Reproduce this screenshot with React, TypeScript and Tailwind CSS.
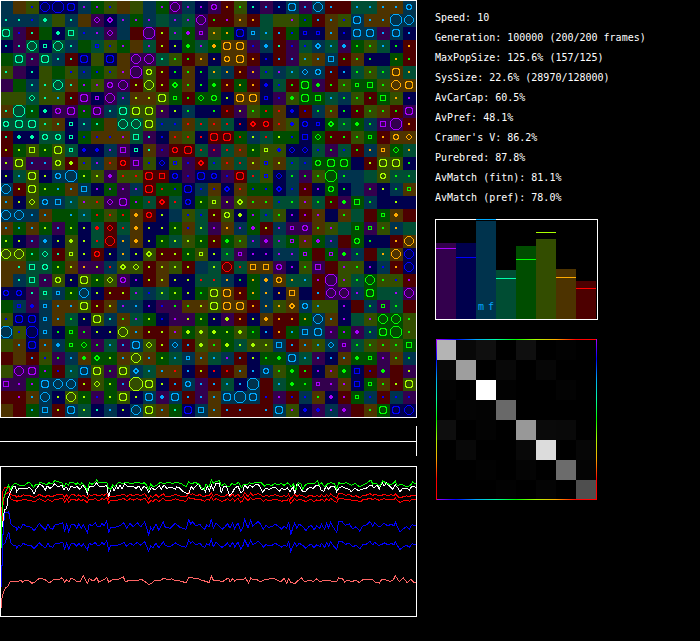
import React from "react";

const BRIGHT: Record<string, string> = {
  P: "#aa00ff", B: "#0000ff", C: "#00aaff", T: "#00ffaa",
  G: "#00ff00", Y: "#aaff00", O: "#ffaa00", R: "#ff0000",
};
const DARK: Record<string, string> = {
  P: "#33004d", B: "#00004d", C: "#00334d", T: "#004d33",
  G: "#004d00", Y: "#334d00", O: "#4d3300", R: "#4d0000",
};

// One token per cell: background, marker colour, marker shape.
const FIELD = [
  "C.. O.. YBa BBO BBX BBo CPa GPa YBa O.. Y.. C.. GPa PPO CPa BPa PPc ROa YGa BTa PCa BCa CCo PCa CCO RCa R.. TCa TCa OCa OCa CCc",
  "CTa CTa CBa TTb Y.. CTa O.. PPd BPr CPa GPa CPa T.. CPa TPa PPO RGa RPa OOa ROa T.. Y.. YPa GBa RCa OCa YBa CCo OCa OCa CCX CCO",
  "TTo PBa RTa G.. BTb TTq CBa CPa PPd C.. R.. PPX RYa TPa GPb PPs YOa GOa BBo CCs TCa RCa GBa BBs BBs OCa BBa CCo CCo PCa CCo BCa",
  "BTa PTa TTO BTs TTO CTa G.. TBs YBa GPa O.. TPa RYa BYa GGb TPa GOb OOo OOo PBa CCb RTa PBa TBa CCr TCa PCb GGa YGa TCa BGa ROa",
  "G.. TTo PTa TTo CTa RTa BBo Y.. BBo O.. PPO PPO TTa YGa RGa OOa BOa OOc OOo ROa BBa RCa PCa YCa OCa CCq RGa OGa BGa B.. GOa RGa",
  "YTa P.. BTa Y.. G.. YBa CBa GBa YBa OPa PPX YYc RYa BGa OGa BGa TOa COa ROa POa TBa CPa TCa CCd CCc RCa BCa TGa YGa TGa OOo TOa",
  "P.. G.. CTa YTa TTO OTa GPa YPa PPc PPO RYa YYO RYa GGr OGa BGa GGb ROa GOa ROa BBb TBa RGa GGo PGb RGa YGa GGs GGq YGa OOO OOo",
  "Y.. Y.. TTd YTa YCa RTa PPo BPs PPO CPa OYa OYa YYo GGs RGa GGd GGc BYa OOo OOo BBs PBa YGb GGo GGq TCa CGa YGa RGa GGq YOa BPa",
  "OTa TTX GTa BTb PPc PPo GPa PPo CTa TTo YYo YYo PYa BYa CGa B.. BGa RRa PYa YGa GRa ORa BBb RBa CGa OGa BGa RGa YGa OGa RGa PPo",
  "TTc TTo TTo YTa OTa BTs CTa GTa O.. TTO TTO YYo CBa CBa ORa TRa ORa TRa BRa RRr RRc ORa YBb BBc BBs GGr TGa GGb CGa PPq PPX ROa",
  "RTa BTb BTb TTc TTc BTs GBa OBa OBa OPa TTq PTa BBa ORa YRa BRa RRo RRo GRa CYa TRa GYa GBa BBq GGd RGa RGa YGa GGs ROa OOc OOd",
  "RYa GYa YYq GYa YYo TTs BBb BBb CPa PPq BTs OTa PBa RRc RRo TRa PRa TRa ORa GYa YYs YBb BBd BBd TBa PGa TBa RGa COa OOs GGd TOa",
  "PYa YYo PCa PCa YYc RYb YBa CPa ORa RRc PPq YBa BBd YBs PBa RRr TBa ORa TRa OYa YBs OYa TBa CBa GGc GGo GGo B.. RYa YYo YYo BGa",
  "BYa TCa YYo BYa CCc CCX GYa YYa PPb YRa YRa RRo RRq BBc PBa BBo BBc PBa RRo TRa YBs BBd CGa PGa YGa GGX CGa C.. T.. YYc TGa TGa",
  "CCO RYa YYo GYa GCa OCa CCq BPa GPa PPa CPa RRo GRa GBa BBo CBa OBa BBr ORa GBa GBa BBr CBa RPa BPa GGc BGa C.. PGa BYa CGa OGs",
  "OCa BYa YYd CCc CCq TCa YPa YRa PPd PPo GPa TRa RRr TRa BBc GYa YYs PYa YYr OGa OGa TBa TGa OPa TGa RGa PGb GGq CGa B.. BYa B..",
  "CCO CCO CCa OCa G.. GCa TCa GRa YRa GRa OOb RRc BYa C.. YBa TBa RYa YYc BYb GPa TBa YGa BPa RPa OPa B.. OGa T.. R.. GGs OOb R..",
  "OCa GCa OCa GYa PCa GYa BYa TRb RRd TRa OOb BYa BYa GYa OBa TYa PPa OOa CPa GPb RYa CPa PPs PPc OGa YPa T.. GGs PGs YGa COa T..",
  "GYa BYa PCa CCb BYa YYb BYa TRa RRO COa OOb BYa GYa TYa YYa GYa RYa GGb YGa CPa PPb TPa GPs OPa GPb CPa R.. GGc BGa B.. ROa OOO",
  "YYO YYO GTa TTd RTa YYs BYa RRc BYa COa BYa YYr RYa RYa GYa YYs BYa TGa PPs BPa BPa CPa CPa GPs R.. GPs PGb CGa R.. TOa OOO BBO",
  "O.. OTa TTq TTc GYa OYa POa PYa CRa YYr YYd RYa OYa YYa RYa C.. TYa RRO TRa OOq OOq PPc BPa YGa PPq R.. YPa YGa BPa CBa ROa BBO",
  "O.. CTa TTq PTa YYc BYa YYo GYa YYd PPc BPa RYa OYa BYa BYa TRa TRa COa BGa GOa COb OOc TOa TCa RPa PPX YPa TGa GGO YGa YBa RPa",
  "BBc BBc PTa TTs CCs GYa CCO BYa RYa RYa TPa CBa TYa GYa BYa GGa YYo OOo ROa GOa COa BOa OOq B.. RCa PPO PPO CPa GGo T.. TPa PPO",
  "G.. CBs PBb CCs OCa OCa YYo RYa OYa CPa CCa BPa PBa PGa OGa OYa YYo OOo OOo ROa COa YOa OOr CCc YCa Y.. BPa R.. CGa PGs TGa R..",
  "YBa BBo BBo CCs OCa TGa BYa YYo CTa OGa TPa GYa BBa PPa PYa GYa BYa PYb ROa BYa OOb ROa ROa GOa CCO OCa BPa T.. YPa GGO GGO YGa",
  "CCX YBa BBX CCs BGa GGs PGa BYa BYa YYO OCa RYa RYa OPa GYb YYb GYb GYa YYb GGa BCa ROa GCa CCq CCo PPa GPa PPb CGa GGo GGX YGa",
  "Y.. OCa BBo OCa CCb GGs GGd PGa TCa PCa CCo YYd RYa CCd RCa YYb OGa GYb TYa YYb YYa CCq RCa OCa YCa CCd PPs TGa YGa OGa YGa GGq",
  "R.. O.. RCa YBa PGa CCa OGb GGr GYa OCa YYO OCa GYa TCa CCs OCa TCa CPa RCa BYa GGa GGb CCo TCa PCa BCa OCa GGb GGs PPa OGa CGa",
  "Y.. PPO PPo GPa RBa TCa CCo YYo PGa YYo CCr TCa OCa ORa BCa RYa BRa RRa OCa BCa CCc YGa GGb RGa BPa OPa GGb BBq RBa PGb R.. PYa",
  "PPq PPa GPa CCo CCO CCO RYa YYd GYa PCa YYZ YYo BYa RCa CCc PCa RCa TCa BCa CCX R.. TCa GGb GGa PPs PPa OPa BBq GGs OGa RYa YYo",
  "R.. RPa OCa CCO BYa YYO GYa PBa GYa YYo BYa CCo PCb CCo RCa PCa OCa CCo CCX CCo RBa PPa RBa CBa OGa BPb RPa GGs CBa RBa CBa PBa",
  "O.. R.. GCa CCq RYa CCo TYa BTa CCa BYa CCO YYo OCa GTa BBo CCq OCa RCa RCa R.. RCa CCo YPa BBb PBb CPa PPb R.. OGa GGo BBo BBO",
].map((row) => row.split(" "));

// Ring built from whole pixels: four straight runs joined by diagonal corners.
function ringPath(x: number, y: number, half: number, cut: number) {
  const run = 2 * (half - cut);
  let d = "";
  d += `M${x - half + cut} ${y - half}h${run}v1h-${run}z`;
  d += `M${x - half + cut} ${y + half - 1}h${run}v1h-${run}z`;
  d += `M${x - half} ${y - half + cut}h1v${run}h-1z`;
  d += `M${x + half - 1} ${y - half + cut}h1v${run}h-1z`;
  const steps = cut === 1 ? [[1, 1]] : Array.from({ length: cut - 1 }, (_, k) => [k + 1, cut - 1 - k]);
  for (const [i, j] of steps) {
    d += `M${x - half + i} ${y - half + j}h1v1h-1z`;
    d += `M${x + half - 1 - i} ${y - half + j}h1v1h-1z`;
    d += `M${x - half + i} ${y + half - 1 - j}h1v1h-1z`;
    d += `M${x + half - 1 - i} ${y + half - 1 - j}h1v1h-1z`;
  }
  return d;
}

const RINGS: Record<string, [number, number]> = {
  d: [3, 2], c: [3, 1], o: [4, 1], O: [5, 3], X: [6, 3], Z: [7, 4],
};

function Marker({ shape, color, x, y }: { shape: string; color: string; x: number; y: number }) {
  const ring = { fill: "none", stroke: color, strokeWidth: 1 };
  if (shape in RINGS) {
    return <path d={ringPath(x, y, RINGS[shape][0], RINGS[shape][1])} fill={color} />;
  }
  switch (shape) {
    case "a":
      return <rect x={x - 1} y={y - 1} width={2} height={2} fill={color} />;
    case "b":
      return <path d={`M${x - 1} ${y - 2}h2v1h1v2h-1v1h-2v-1h-1v-2h1z`} fill={color} />;
    case "s":
      return <rect x={x - 1.5} y={y - 1.5} width={3} height={3} {...ring} />;
    case "r":
      return (
        <path
          fillRule="evenodd"
          d={`M${x - 1} ${y - 3}h2v1h1v1h1v2h-1v1h-1v1h-2v-1h-1v-1h-1v-2h1v-1h1zM${x - 1} ${y - 1}h2v2h-2z`}
          fill={color}
        />
      );
    case "q":
      return <rect x={x - 2.5} y={y - 2.5} width={5} height={5} {...ring} />;
    default:
      return null;
  }
}

function Field() {
  return (
    <svg width={417} height={418} shapeRendering="crispEdges" role="img" aria-label="Population field" className="block">
      {FIELD.map((row, r) =>
        row.map((cell, c) => (
          <rect key={`${r}-${c}`} x={c * 13} y={r * 13 + 1} width={13} height={13} fill={DARK[cell[0]]} />
        ))
      )}
      {FIELD.map((row, r) =>
        row.map((cell, c) => (
          <Marker key={`${r}-${c}`} shape={cell[2]} color={BRIGHT[cell[1]]} x={c * 13 + 6} y={r * 13 + 7} />
        ))
      )}
      <rect x={0.5} y={0.5} width={416} height={417} fill="none" stroke="#fff" />
    </svg>
  );
}

// History samples as x,y pairs at three units per pixel; the second half starts at x = 624.
type Series = { left: number[]; right: number[] };

const GREEN: Series = {
  left: [4,383,5,310,8,245,14,225,20,208,26,195,32,208,38,195,46,190,58,195,66,198,74,195,85,187,92,190,100,203,108,193,114,195,120,188,132,190,140,195,146,188,156,192,164,182,176,186,186,188,192,200,198,190,205,196,210,187,220,187,228,193,234,188,240,195,246,188,256,200,262,212,268,188,276,193,284,188,290,180,296,188,310,188,320,186,325,205,332,208,338,195,344,200,354,188,370,190,380,186,392,192,404,188,418,188,426,192,432,188,440,195,446,208,452,192,460,200,470,195,480,188,492,190,505,188,520,190,530,186,545,192,558,200,566,186,576,192,584,187,592,190,600,195,606,205,612,210,618,192],
  right: [0,198,4,200,10,180,16,190,22,185,34,182,40,198,50,190,58,200,64,200,72,190,80,195,92,187,100,203,108,192,116,195,124,188,132,192,140,188,160,188,170,198,180,192,190,198,200,190,210,195,220,190,228,196,240,188,250,200,256,192,264,210,270,188,278,190,284,207,292,195,302,190,318,192,328,182,334,195,340,188,350,200,360,190,370,188,380,192,386,208,392,188,402,192,414,188,430,196,442,190,454,200,466,195,478,188,488,180,494,192,504,190,515,198,524,182,535,190,548,194,556,190,562,183,568,198,578,192,590,198,600,200,608,195,614,186,624,192],
};
const WHITE: Series = {
  left: [8,320,10,290,14,270,20,265,24,235,32,215,40,200,46,200,50,215,58,205,66,207,80,205,90,203,96,210,102,222,108,208,120,192,130,200,136,210,142,198,150,205,158,200,164,190,172,200,186,196,192,210,198,200,206,212,214,198,222,203,232,200,240,208,248,196,256,205,262,222,268,200,280,200,290,188,298,200,310,200,320,195,326,232,332,208,338,202,342,212,350,198,354,208,360,195,366,207,374,192,384,200,398,198,408,205,416,198,424,210,432,198,440,205,446,218,454,203,466,210,478,198,484,208,492,195,500,205,514,202,526,208,530,200,540,205,550,215,566,222,574,200,580,207,588,198,596,192,604,210,610,205,616,215,622,200],
  right: [0,205,4,212,10,195,16,210,24,190,34,190,40,220,46,200,56,200,64,226,72,220,80,205,90,198,98,218,104,215,110,195,118,205,126,195,134,202,142,195,150,192,158,205,164,218,172,205,184,208,196,202,206,205,214,215,220,205,230,210,238,203,246,215,250,208,256,200,260,222,268,190,276,202,284,215,292,215,300,205,308,203,316,205,326,195,334,195,340,212,348,214,354,198,362,208,370,198,380,200,386,215,394,202,404,200,414,205,424,208,430,216,440,205,452,212,462,208,474,205,484,198,492,195,498,205,508,195,514,208,522,186,528,198,536,188,544,198,554,208,562,195,570,205,576,215,584,205,596,205,604,210,612,198,624,202],
};
const BLUE: Series = {
  left: [32,310,38,318,48,322,50,330,56,320,62,325,70,312,78,318,86,320,94,322,102,333,110,322,118,310,126,320,136,330,144,313,150,325,158,328,164,315,176,312,188,308,194,335,200,310,206,336,214,312,222,312,230,325,236,312,244,325,250,315,256,325,262,338,268,312,276,318,286,308,292,320,300,320,306,308,312,318,320,302,326,340,332,322,345,322,358,318,372,308,380,325,390,310,400,320,412,308,422,320,434,306,446,344,452,322,458,330,468,312,476,330,490,306,496,322,510,325,518,318,526,310,540,322,558,328,566,300,572,312,578,305,588,318,600,312,606,322,614,328,620,315],
  right: [4,320,10,296,16,325,24,308,32,318,42,328,52,320,58,310,66,325,74,308,80,326,90,308,98,334,104,325,110,298,120,325,128,300,134,318,142,312,150,305,158,312,166,328,174,316,182,322,192,320,202,312,212,320,222,328,228,318,236,325,242,306,248,344,254,325,260,308,266,325,274,312,284,320,294,332,302,320,310,316,318,330,326,318,336,325,340,312,350,328,356,310,362,325,368,306,376,322,386,337,392,305,402,305,412,316,424,312,434,326,444,320,456,334,464,318,474,316,486,305,494,318,500,308,512,320,520,318,528,310,540,318,550,312,558,318,562,305,570,325,576,337,586,326,596,320,604,328,612,314,624,318],
};
const SALMON: Series = {
  left: [4,565,6,535,10,518,16,505,24,498,32,483,42,483,55,485,62,480,68,486,78,480,88,483,96,490,106,485,118,475,134,478,146,488,154,485,162,477,176,480,186,473,194,486,200,480,208,485,214,474,224,480,232,486,240,485,250,467,262,490,268,476,280,483,290,473,296,486,310,480,320,473,326,486,340,478,350,480,370,470,376,485,392,480,410,483,424,478,440,488,446,493,456,490,466,480,478,482,492,475,505,480,515,476,526,482,540,483,558,488,566,473,590,475,604,480,620,485],
  right: [4,488,10,468,16,480,30,480,42,486,54,478,62,474,66,486,74,476,80,483,90,477,104,480,112,473,122,489,128,474,138,480,146,478,156,485,168,480,180,478,194,474,206,480,218,485,228,475,236,490,242,476,248,488,262,490,270,482,280,473,290,485,305,480,316,485,326,476,336,485,350,480,370,483,386,485,392,474,404,477,410,486,420,480,430,486,444,480,454,488,466,478,480,480,492,477,504,488,514,489,522,478,534,480,546,484,556,480,562,467,574,485,586,474,598,488,608,478,616,486,624,486],
};

function trace(series: Series, base = 0, centre = 0, gain = 1, lead: number[] = []) {
  const out: string[] = [];
  const add = (x: number, y: number) => out.push(`${(x / 3).toFixed(1)},${(y / 3 - 46).toFixed(1)}`);
  for (let i = 0; i < lead.length; i += 2) add(lead[i], lead[i + 1]);
  for (let i = 0; i < series.left.length; i += 2)
    add(series.left[i], base + (series.left[i + 1] - centre) * gain);
  for (let i = 0; i < series.right.length; i += 2)
    add(series.right[i] + 624, base + (series.right[i + 1] - centre) * gain);
  return out.join(" ");
}

function History() {
  return (
    <svg width={417} height={151} shapeRendering="crispEdges" fill="none" role="img" aria-label="History" className="mt-2.5 block">
      <polyline points={trace(SALMON)} stroke="#ff6666" />
      <polyline points={trace(BLUE, 375, 319, 0.75, [4,500,7,410,8,375,16,368,26,335])} stroke="#0000ff" />
      <polyline points={trace(BLUE, 319, 319, 1, [5,480,7,400,10,320,14,280,26,275])} stroke="#0000ff" />
      <polyline points={trace(BLUE, 240, 319, 0.42, [4,340,10,240,14,225,26,216])} stroke="#ff0000" />
      <polyline points={trace(BLUE, 227, 319, 0.42, [4,310,8,215,14,202,26,200])} stroke="#ff0000" />
      <polyline points={trace(WHITE)} stroke="#ffffff" />
      <polyline points={trace(GREEN)} stroke="#00ff00" />
      <rect x={0.5} y={0.5} width={416} height={150} stroke="#fff" />
    </svg>
  );
}

const BARS = [
  { key: "P", top: 24, mark: 29 },
  { key: "B", top: 24, mark: 38 },
  { key: "C", top: 2, mark: 0 },
  { key: "T", top: 51, mark: 59 },
  { key: "G", top: 27, mark: 40 },
  { key: "Y", top: 20, mark: 13 },
  { key: "O", top: 50, mark: 58 },
  { key: "R", top: 62, mark: 69 },
];

function Bars() {
  return (
    <svg width={163} height={101} shapeRendering="crispEdges" role="img" aria-label="Population by type" className="mt-[11px] block">
      <rect x={0.5} y={0.5} width={162} height={100} fill="none" stroke="#fff" />
      {BARS.map((b, i) => (
        <g key={b.key}>
          <rect x={1 + i * 20} y={b.top} width={20} height={100 - b.top} fill={DARK[b.key]} />
          <rect x={1 + i * 20} y={b.mark} width={20} height={1} fill={BRIGHT[b.key]} />
        </g>
      ))}
      <text x={43} y={91} fill="#00aaff" className="font-['DejaVu_Sans_Mono',monospace] text-[10px]">m</text>
      <text x={53} y={91} fill="#00aaff" className="font-['DejaVu_Sans_Mono',monospace] text-[10px]">f</text>
    </svg>
  );
}

const MATRIX = [
  [180, 8, 15, 0, 15, 0, 2, 0],
  [8, 158, 0, 8, 0, 6, 0, 0],
  [3, 0, 255, 2, 0, 0, 3, 0],
  [0, 4, 3, 105, 0, 0, 0, 0],
  [14, 0, 3, 0, 152, 10, 9, 0],
  [0, 8, 0, 0, 8, 220, 0, 6],
  [0, 0, 2, 0, 4, 0, 108, 4],
  [0, 0, 0, 2, 0, 4, 0, 78],
];
const SPECTRUM = ["#aa00ff", "#0000ff", "#00aaff", "#00ffaa", "#00ff00", "#aaff00", "#ffaa00", "#ff0000"];

function Matrix() {
  return (
    <svg width={161} height={161} shapeRendering="crispEdges" role="img" aria-label="Mating matrix" className="ml-px mt-[19px] block">
      <defs>
        <linearGradient id="across" gradientUnits="userSpaceOnUse" x1="0" y1="0" x2="140" y2="0">
          {SPECTRUM.map((c, i) => <stop key={c} offset={i / 7} stopColor={c} />)}
        </linearGradient>
        <linearGradient id="down" gradientUnits="userSpaceOnUse" x1="0" y1="0" x2="0" y2="140">
          {SPECTRUM.map((c, i) => <stop key={c} offset={i / 7} stopColor={c} />)}
        </linearGradient>
      </defs>
      {MATRIX.map((row, r) =>
        row.map((v, c) => (
          <rect key={`${r}-${c}`} x={c * 20} y={r * 20 + 1} width={20} height={20} fill={`rgb(${v},${v},${v})`} />
        ))
      )}
      <rect x={0} y={0} width={161} height={1} fill="url(#across)" />
      <rect x={0} y={160} width={161} height={1} fill="url(#across)" />
      <rect x={0} y={0} width={1} height={161} fill="url(#down)" />
      <rect x={160} y={0} width={1} height={161} fill="url(#down)" />
    </svg>
  );
}

const STATS = [
  "Speed: 10",
  "Generation: 100000 (200/200 frames)",
  "MaxPopSize: 125.6% (157/125)",
  "SysSize: 22.6% (28970/128000)",
  "AvCarCap: 60.5%",
  "AvPref: 48.1%",
  "Cramer's V: 86.2%",
  "Purebred: 87.8%",
  "AvMatch (fitn): 81.1%",
  "AvMatch (pref): 78.0%",
];

export default function App() {
  return (
    <main className="flex min-h-screen items-start gap-[18px] bg-black font-['DejaVu_Sans_Mono',monospace] text-white">
      <section className="shrink-0">
        <Field />
        <div className="mt-2 flex h-[30px] items-center border-r border-white">
          <div className="h-px w-full bg-white" />
        </div>
        <History />
      </section>
      <section className="min-w-0 flex-1 pt-2">
        <ul className="text-[10px] leading-5">
          {STATS.map((line) => (
            <li key={line} className="whitespace-nowrap">{line}</li>
          ))}
        </ul>
        <Bars />
        <Matrix />
      </section>
    </main>
  );
}
